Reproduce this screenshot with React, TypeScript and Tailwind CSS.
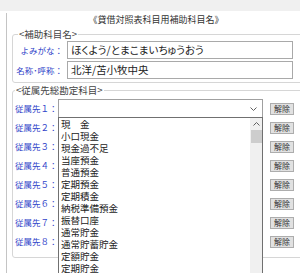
import React from 'react';

const kanjoItems = [
  '現　金',
  '小口現金',
  '現金過不足',
  '当座預金',
  '普通預金',
  '定期預金',
  '定期積金',
  '納税準備預金',
  '振替口座',
  '通常貯金',
  '通常貯蓄貯金',
  '定額貯金',
  '定期貯金',
];

const rows = ['従属先１：', '従属先２：', '従属先３：', '従属先４：', '従属先５：', '従属先６：', '従属先７：', '従属先８：'];

const Chevron: React.FC<{ up?: boolean }> = ({ up }) => (
  <svg width="7" height="4" viewBox="0 0 7 4" className="block">
    <path
      d={up ? 'M0.5 3.5 L3.5 0.5 L6.5 3.5' : 'M0.5 0.5 L3.5 3.5 L6.5 0.5'}
      fill="none"
      stroke="#606060"
      strokeWidth="1"
    />
  </svg>
);

const App: React.FC = () => {
  return (
    <div className="relative w-[300px] h-[273px] overflow-hidden bg-white text-[#222] font-['Noto_Sans_CJK_JP',sans-serif]">
      <div className="h-[11px] bg-[#f0f0f0]" />

      <div className="ml-[6px] w-[300px] h-[262px] border-l border-[#c4c4c4] pl-[5px]">
        <div className="mt-[2px] w-[288px] text-center text-[9px] leading-[14px] text-[#333]">
          《貸借対照表科目用補助科目名》
        </div>

        {/* 補助科目名 */}
        <fieldset className="w-[300px] border border-[#d6d6d6] rounded-[3px] pb-[3px]">
          <legend className="ml-[5px] px-[1px] text-[9.5px] leading-[14px] text-[#444]">&lt;補助科目名&gt;</legend>
          <div className="flex flex-col gap-[2px]">
            <div className="flex items-center h-[18px]">
              <div className="w-[54px] pr-[4px] text-right text-[8.5px] text-[#2f43c9] whitespace-nowrap">よみがな：</div>
              <div className="w-[226px] h-[18px] border border-[#a9a9a9] px-[3px] text-[10.5px] leading-[16px] [font-feature-settings:'palt'] whitespace-nowrap">
                ほくよう/とまこまいちゅうおう
              </div>
            </div>
            <div className="flex items-center h-[18px]">
              <div className="w-[54px] pr-[4px] text-right text-[8.5px] text-[#2f43c9] whitespace-nowrap">名称･呼称：</div>
              <div className="w-[226px] h-[18px] border border-[#a9a9a9] px-[3px] text-[10.5px] leading-[16px] whitespace-nowrap">
                北洋/苫小牧中央
              </div>
            </div>
          </div>
        </fieldset>

        {/* 従属先総勘定科目 */}
        <fieldset className="w-[300px] border border-[#d6d6d6] rounded-[3px] pt-[2px] pb-[6px]">
          <legend className="ml-[2px] px-[1px] text-[9.5px] leading-[14px] text-[#444]">&lt;従属先総勘定科目&gt;</legend>
          {rows.map((label) => (
            <div key={label} className="flex items-center h-[19px]">
              <div className="w-[45px] pl-[2px] text-[8.5px] text-[#2f43c9] whitespace-nowrap">{label}</div>
              <div className="flex items-center justify-end w-[205px] h-[19px] border border-[#a0a0a0] bg-white pr-[5px]">
                <Chevron />
              </div>
              <button className="ml-[7px] w-[24px] h-[12px] border border-[#adadad] bg-[#e1e1e1] text-[8px] leading-[10px] text-[#333]">
                解除
              </button>
            </div>
          ))}
        </fieldset>
      </div>

      {/* open dropdown list */}
      <div className="absolute left-[58px] top-[117px] w-[205px] h-[170px] border border-[#707070] bg-white flex">
        <div className="flex-1 pl-[2px] overflow-hidden">
          {kanjoItems.map((item) => (
            <div key={item} className="h-[12px] text-[9.5px] leading-[12px] whitespace-nowrap">
              {item}
            </div>
          ))}
        </div>
        <div className="w-[12px] bg-[#f0f0f0] flex flex-col items-center">
          <div className="h-[12px] flex items-center justify-center">
            <Chevron up />
          </div>
          <div className="w-[11px] h-[13px] bg-[#cdcdcd]" />
        </div>
      </div>
    </div>
  );
};

export default App;
